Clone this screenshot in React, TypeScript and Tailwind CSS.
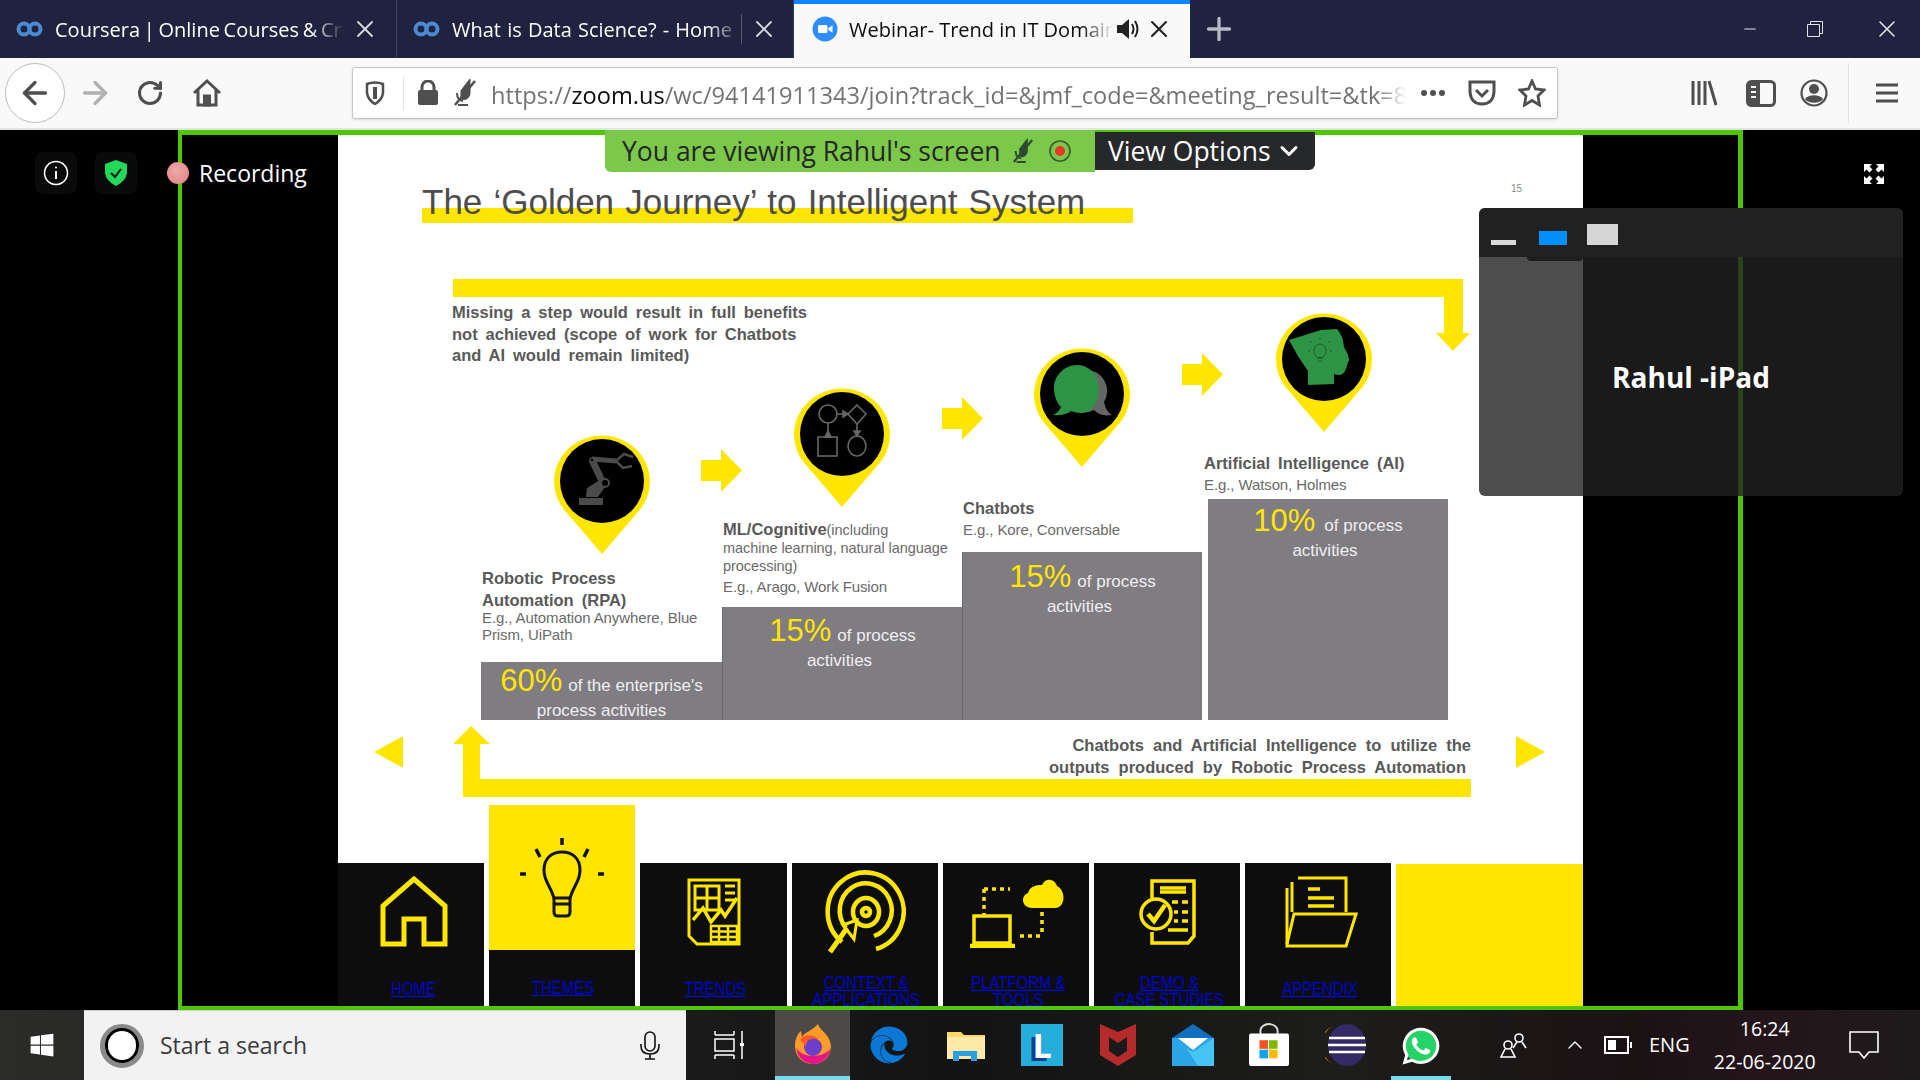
import { ArrowLeft, ArrowRight, RotateCw, ChevronDown, ChevronUp, Plus, X, Minus } from 'lucide-react';
import { FaEdge, FaWhatsapp, FaWindows } from 'react-icons/fa';

const Y = '#ffe600';

function CourseraLogo() {
  return (
    <svg width="27" height="16" viewBox="0 0 27 16" fill="none" stroke="#4a8ad0" strokeWidth="4">
      <circle cx="8" cy="8" r="5.5" />
      <circle cx="19" cy="8" r="5.5" />
    </svg>
  );
}

function ZoomLogo() {
  return (
    <svg width="26" height="26" viewBox="0 0 26 26">
      <circle cx="13" cy="13" r="12.5" fill="#2d8cff" />
      <rect x="6" y="9" width="9.5" height="8" rx="1.5" fill="#fff" />
      <path d="M16.5 12 L20.5 9.3 V16.7 L16.5 14 Z" fill="#fff" />
    </svg>
  );
}

function BrowserTab({ title, closeGap, spacing, sep }: { title: string; closeGap: string; spacing: string; sep?: boolean }) {
  return (
    <div className="flex h-[58px] w-[397px] items-center border-r border-[#3b3e5c] pl-4">
      <CourseraLogo />
      <span className={`${spacing} ml-3 w-[290px] overflow-hidden whitespace-nowrap pt-[2px] text-[20px] text-white [mask-image:linear-gradient(to_right,black_88%,transparent)]`}>
        {title}
      </span>
      {sep && <span className="ml-[-1px] h-[30px] w-px bg-[#555870]" />}
      <X className={`${closeGap} h-7 w-7 text-[#d5d6de]`} strokeWidth={1.6} />
    </div>
  );
}

function PinShape({ children }: { children: React.ReactNode }) {
  return (
    <svg width="96" height="119" viewBox="-48 -46 96 119" className="block">
      <path d="M0 73 L-35 32 A48 46 0 1 1 35 32 Z" fill={Y} />
      <circle cx="0" cy="0" r="42" fill="#000" />
      {children}
    </svg>
  );
}

function RobotIcon() {
  return (
    <g fill="#4b4b4b" stroke="#4b4b4b">
      <rect x="-23" y="17" width="24" height="7" strokeWidth="0" />
      <path d="M-16 16 L-15 7 L-2 -1 L3 6 L-4 16 Z" strokeWidth="0" />
      <path d="M1 2 L-10 -21" strokeWidth="7" fill="none" />
      <path d="M-10 -22 L14 -20" strokeWidth="5" fill="none" />
      <path d="M14 -20 L22 -27 L31 -24 M14 -20 L21 -13 L30 -15" strokeWidth="2.5" fill="none" />
      <circle cx="3" cy="2" r="4" fill="#000" strokeWidth="2" />
      <circle cx="-10" cy="-21" r="2" fill="#000" strokeWidth="1.5" />
    </g>
  );
}

function FlowIcon() {
  return (
    <g fill="none" stroke="#666" strokeWidth="1.6">
      <circle cx="-14" cy="-20" r="9" />
      <path d="M15 -29 L24 -20 L15 -10 L6 -20 Z" />
      <rect x="-24" y="3" width="19" height="19" />
      <ellipse cx="15" cy="12" rx="9" ry="10" />
      <path d="M-5 -20 H6 M-14 -11 V3 M15 -10 V2" />
      <path d="M1 -23 L6 -20 L1 -17 Z M-17 3 L-14 -3 L-11 3 Z M12 -3 L15 2 L18 -3 Z" fill="#666" />
    </g>
  );
}

function ChatIcon() {
  return (
    <g>
      <path d="M4 -24 A20 21 0 0 1 22 8 Q24 18 30 21 Q18 23 12 16 Q0 22 -10 14 Z" fill="#666" />
      <path d="M-5 -29 C-18 -29 -28 -18 -28 -6 C-28 4 -24 10 -21 13 Q-23 18 -29 21 Q-17 22 -11 17 Q-6 19 -1 19 C10 19 17 8 17 -5 C17 -18 8 -29 -5 -29 Z" fill="#2e9445" />
    </g>
  );
}

function HeadIcon() {
  return (
    <g>
      <path d="M-35 -19 L-3 -29 L13 -30 Q19 -24 20 -12 L24 -4 Q25 0 25 2 L24 3 Q23 8 21 12 Q18 18 10 15 L10 25 L-16 26 L-16 12 Q-27 -3 -35 -19 Z" fill="#2e9445" />
      <g fill="none" stroke="#1d5c2b" strokeWidth="1">
        <ellipse cx="-4" cy="-8" rx="6" ry="7" />
        <path d="M-7 -1 H-1 M-6 2 H-2 M-4 -22 V-20 M-14 -18 L-12 -16 M6 -18 L4 -16 M-16 -8 H-14 M6 -8 H8" />
      </g>
    </g>
  );
}

function StepArrow({ className }: { className: string }) {
  return (
    <svg width="41" height="43" viewBox="0 0 41 43" className={`absolute z-10 ${className}`}>
      <path d="M0 11 H20 V0 L41 21.5 L20 43 V32 H0 Z" fill={Y} />
    </svg>
  );
}

function Stat({ pct, line1, line2, gap, nudge }: { pct: string; line1: string; line2: string; gap?: string; nudge?: string }) {
  return (
    <div className="text-center text-[17px] text-[#f0eff1]">
      <div className="flex items-baseline justify-center">
        <span className="text-[31px] leading-[36px] text-[#ffe600]">{pct}</span>
        <span className={gap ?? 'ml-[6px]'}>{line1}</span>
      </div>
      <div className={`leading-[24px] ${nudge ?? ''}`}>{line2}</div>
    </div>
  );
}

function RpaColumn() {
  return (
    <div className="relative w-[241px]">
      <div className="flex justify-center"><PinShape><RobotIcon /></PinShape></div>
      <StepArrow className="right-[-20px] top-[14px]" />
      <div className="h-[108px] pl-[1px] pt-[13px] text-[#595959]">
        <div className="text-[16.5px] font-bold leading-[22px] [word-spacing:3.5px]">Robotic Process<br />Automation (RPA)</div>
        <div className="mt-[-2px] text-[15px] leading-[17px] tracking-[-0.1px] text-[#6a6a6a]">E.g., Automation Anywhere, Blue<br />Prism, UiPath</div>
      </div>
      <div className="h-[58px] overflow-hidden bg-[#7f7c82] pt-[1px]">
        <Stat pct="60%" line1="of the enterprise's" line2="process activities" />
      </div>
    </div>
  );
}

function MlColumn() {
  return (
    <div className="relative w-[240px]">
      <div className="flex justify-center"><PinShape><FlowIcon /></PinShape></div>
      <StepArrow className="right-[-21px] top-[9px]" />
      <div className="h-[100px] pl-[1px] pt-[13px] text-[#6a6a6a]">
        <div className="text-[14.5px] leading-[18px] tracking-[-0.05px]">
          <span className="text-[16.5px] font-bold tracking-normal text-[#595959]">ML/Cognitive</span>(including<br />
          machine learning, natural language<br />processing)
        </div>
        <div className="mt-[3px] text-[15px] leading-[18px] tracking-[-0.1px]">E.g., Arago, Work Fusion</div>
      </div>
      <div className="h-[113px] border-l border-[#6a686d] bg-[#7f7c82] pt-[6px]">
        <Stat pct="15%" line1="of process" line2="activities" nudge="pr-[6px]" />
      </div>
    </div>
  );
}

function ChatColumn() {
  return (
    <div className="relative w-[240px]">
      <div className="flex justify-center"><PinShape><ChatIcon /></PinShape></div>
      <StepArrow className="right-[-21px] top-[5px]" />
      <div className="h-[85px] pl-[1px] pt-[30px]">
        <div className="text-[16.5px] font-bold leading-[22px] text-[#595959]">Chatbots</div>
        <div className="mt-[2px] text-[15px] leading-[18px] tracking-[-0.1px] text-[#6a6a6a]">E.g., Kore, Conversable</div>
      </div>
      <div className="h-[168px] border-l border-[#6a686d] bg-[#7f7c82] pt-[7px]">
        <Stat pct="15%" line1="of process" line2="activities" nudge="pr-[6px]" />
      </div>
    </div>
  );
}

function AiColumn() {
  return (
    <div className="ml-[6px] w-[240px]">
      <div className="flex justify-center pr-[8px]"><PinShape><HeadIcon /></PinShape></div>
      <div className="ml-[-4px] h-[67px] w-[260px] pt-[20px]">
        <div className="text-[16.5px] font-bold leading-[22px] text-[#595959] [word-spacing:3.5px]">Artificial Intelligence (AI)</div>
        <div className="text-[15px] leading-[21px] tracking-[-0.1px] text-[#6a6a6a]">E.g., Watson, Holmes</div>
      </div>
      <div className="h-[221px] bg-[#7f7c82] pt-[4px]">
        <Stat pct="10%" line1="of process" line2="activities" gap="ml-[9px]" nudge="pr-[6px]" />
      </div>
    </div>
  );
}

function NavIcon({ name }: { name: string }) {
  const c = Y;
  if (name === 'home') {
    return (
      <svg width="68" height="72" viewBox="0 0 68 72" fill="none" stroke={c} strokeWidth="5" className="ml-[5px]">
        <path d="M3 30 L34 3 L65 30 V68 H44 V43 H24 V68 H3 Z" />
      </svg>
    );
  }
  if (name === 'trends') {
    return (
      <svg width="54" height="68" viewBox="0 0 54 68" fill="none" stroke={c} strokeWidth="3" className="ml-[2px]">
        <path d="M2 2 H52 V66 H10 L2 58 Z" />
        <rect x="8" y="8" width="24" height="24" />
        <path d="M8 20 H32 M20 8 V32 M38 8 H48 M38 15 H48 M38 22 H48" />
        <path d="M6 42 L16 30 L24 44 L34 32 L38 38 L50 20" strokeWidth="3.5" />
        <path d="M24 48 H50 V64 H24 Z M24 53.5 H50 M24 59 H50 M32 48 V64 M41 48 V64" strokeWidth="2.4" />
      </svg>
    );
  }
  if (name === 'context') {
    return (
      <svg width="82" height="84" viewBox="0 0 82 84" fill="none" stroke={c} strokeWidth="4.5">
        <path d="M18 72 A38 39 0 1 1 52 79" />
        <path d="M22 58 A26 27 0 1 1 50 66" />
        <ellipse cx="42" cy="42" rx="13" ry="14" />
        <circle cx="42" cy="42" r="4" />
        <path d="M6 82 L23 58" strokeWidth="5" />
        <path d="M33 50 L19 55 L30 69 Z" strokeWidth="3" />
      </svg>
    );
  }
  if (name === 'platform') {
    return (
      <svg width="96" height="72" viewBox="0 0 96 72" fill="none" stroke={c} strokeWidth="3.5" className="ml-[5px]">
        <path d="M62 32 C52 32 50 20 58 17 C60 10 66 9 72 9 C75 2 84 2 87 10 C96 14 96 32 85 32 Z" fill={c} stroke="none" />
        <path d="M14 13 H40 M14 13 V44 M72 36 V60 M50 60 H70" strokeDasharray="4 4" />
        <rect x="4" y="40" width="36" height="27" />
        <path d="M0 70 H45" strokeWidth="4.5" />
      </svg>
    );
  }
  if (name === 'demo') {
    return (
      <svg width="60" height="68" viewBox="0 0 60 68" fill="none" stroke={c} strokeWidth="3.5" className="ml-[2px]">
        <path d="M14 20 V3 H56 V58 L50 65 H14 V54" />
        <path d="M22 10 H48 M22 14 H48 M34 24 H40 M44 24 H50 M36 34 H40 M44 34 H50 M36 43 H40 M44 43 H50 M30 52 H50" />
        <circle cx="18" cy="36" r="15" />
        <path d="M10 36 L16 43 L27 27" strokeWidth="4.5" />
      </svg>
    );
  }
  return (
    <svg width="74" height="72" viewBox="0 0 74 72" fill="none" stroke={c} strokeWidth="3" className="ml-[5px]">
      <path d="M14 2 H62 V36 M8 6 V36 M3 12 V68" />
      <path d="M24 13 H36 M24 22 H50 M24 30 H50" strokeWidth="3.5" />
      <path d="M3 68 L10 38 H72 L62 70 H3 Z" />
    </svg>
  );
}

function BulbIcon() {
  return (
    <svg width="84" height="80" viewBox="0 0 84 80" fill="none" stroke="#111" strokeWidth="3">
      <path d="M42 0 V7 M16 11 L20 19 M68 11 L64 19 M0 36 H6 M78 36 H84" strokeWidth="3.5" />
      <path d="M34 60 C30 46 24 44 24 32 C24 20 32 14 42 14 C52 14 60 20 60 32 C60 44 54 46 50 60 Z" />
      <path d="M34 60 V74 Q34 78 38 78 H46 Q50 78 50 74 V60 M34 66 H50" />
    </svg>
  );
}

const navItems = [
  { name: 'home', label: 'HOME' },
  { name: 'trends', label: 'TRENDS' },
  { name: 'context', label: 'CONTEXT &', label2: 'APPLICATIONS' },
  { name: 'platform', label: 'PLATFORM &', label2: 'TOOLS' },
  { name: 'demo', label: 'DEMO &', label2: 'CASE STUDIES' },
  { name: 'appendix', label: 'APPENDIX' },
];

function NavCell({ name, label, label2 }: { name: string; label: string; label2?: string }) {
  return (
    <div className="flex h-[143px] w-[146.2px] flex-col items-center overflow-hidden bg-[#0d0d0d]">
      <div className="flex h-[96px] shrink-0 items-center justify-center pt-[2px]"><NavIcon name={name} /></div>
      <div className={`ml-[3px] scale-x-[0.83] whitespace-nowrap text-center text-[18px] leading-[17px] text-[#0000e6] underline ${label2 ? 'pt-[16px]' : 'pt-[22px]'}`}>
        {label}
        {label2 && <><br />{label2}</>}
      </div>
    </div>
  );
}

function Slide() {
  return (
    <div className="relative flex h-[871px] w-[1245px] flex-col overflow-hidden bg-white font-['Liberation_Sans',sans-serif]">
      <span className="absolute left-[1173px] top-[46px] text-[10px] text-[#8a8a8a]">15</span>

      <div className="h-[144px] pl-[84px] pt-[44px]">
        <div className="relative h-[44px] w-[711px]">
          <div className="absolute bottom-0 left-0 top-[29px] w-full bg-[#ffe600]" />
          <h1 className="relative top-[2px] whitespace-nowrap text-[35px] leading-[42px] text-[#4d4d4d] [word-spacing:1.4px]">
            The ‘Golden Journey’ to Intelligent System
          </h1>
        </div>
      </div>

      <div className="grid h-[441px] shrink-0">
        <svg width="1245" height="80" viewBox="0 0 1245 80" className="col-start-1 row-start-1 self-start">
          <path d="M115 0 H1125 V54 H1132 L1115 72 L1098 54 H1106 V18 H115 Z" fill={Y} />
        </svg>
        <div className="col-start-1 row-start-1 flex items-end self-end pl-[143px]">
          <RpaColumn />
          <MlColumn />
          <ChatColumn />
          <AiColumn />
        </div>
        <div className="col-start-1 row-start-1 self-start pl-[114px] pt-[23px] text-[16.5px] font-bold leading-[21.5px] text-[#595959] [word-spacing:3.3px]">
          Missing a step would result in full benefits<br />
          not achieved (scope of work for Chatbots<br />
          and AI would remain limited)
        </div>
      </div>

      <div className="grid h-[85px] shrink-0">
        <svg width="1245" height="85" viewBox="0 0 1245 85" className="col-start-1 row-start-1">
          <path d="M65 16 V48 L36 32 Z M1178 16 V48 L1207 32 Z" fill={Y} />
          <path d="M133 6 L152 24 H142 V59 H1133 V77 H125 V24 H115 Z" fill={Y} />
        </svg>
        <div className="col-start-1 row-start-1 pr-[112px] pt-[15px] text-right text-[16.5px] font-bold leading-[21.5px] text-[#595959] [word-spacing:4.5px]">
          Chatbots and Artificial Intelligence to utilize the<br />
          <span className="mr-[5px]">outputs produced by Robotic Process Automation</span>
        </div>
      </div>

      <div className="flex h-[201px] shrink-0 items-end gap-[5px] bg-white">
        <NavCell {...navItems[0]} />
        <div className="flex h-[201px] w-[146.2px] flex-col">
          <div className="flex h-[145px] items-start justify-center bg-[#ffe600] pt-[33px]"><BulbIcon /></div>
          <div className="flex-1 bg-[#0d0d0d] pt-[27px] text-center">
            <span className="inline-block scale-x-[0.83] text-[18px] leading-[17px] text-[#0000e6] underline">THEMES</span>
          </div>
        </div>
        {navItems.slice(1).map((n) => (
          <NavCell key={n.name} {...n} />
        ))}
        <div className="h-[142px] flex-1 bg-[#ffe600]" />
      </div>
    </div>
  );
}

function ToolbarIcons() {
  return (
    <div className="ml-auto flex items-center text-[#4f4f50]">
      <svg width="26" height="28" viewBox="0 0 26 28" fill="none" stroke="currentColor" className="mr-[29px]">
        <path d="M2 2 V26 M8 2 V26 M14 2 V26 M18 2 L25 26" strokeWidth="3" />
      </svg>
      <svg width="30" height="27" viewBox="0 0 30 27" className="mr-[24px]">
        <rect x="1.5" y="1.5" width="27" height="24" rx="4" fill="none" stroke="currentColor" strokeWidth="3" />
        <rect x="2" y="2" width="12" height="23" fill="currentColor" />
        <path d="M5 7 H10 M5 12 H10 M5 17 H10" stroke="#f9f9fa" strokeWidth="2" />
      </svg>
      <svg width="28" height="28" viewBox="0 0 28 28" className="mr-[20px]">
        <circle cx="14" cy="14" r="12.5" fill="none" stroke="currentColor" strokeWidth="2.2" />
        <circle cx="14" cy="10" r="5" fill="currentColor" />
        <path d="M5 20 C8 15 20 15 23 20 C20 25 8 25 5 20 Z" fill="currentColor" />
      </svg>
      <span className="mr-[27px] h-[60px] w-px bg-[#e3e3e4]" />
      <svg width="22" height="22" viewBox="0 0 22 22" className="mr-[22px]">
        <path d="M0 3 H22 M0 11 H22 M0 19 H22" stroke="currentColor" strokeWidth="3.2" />
      </svg>
    </div>
  );
}

function Toolbar() {
  return (
    <div className="flex h-[72px] shrink-0 items-center border-b-2 border-[#e4e4e5] bg-[#f9f9fa] text-[#4f4f50]">
      <div className="ml-[5px] flex h-[60px] w-[60px] items-center justify-center rounded-full border border-[#bdbdbd] bg-white">
        <ArrowLeft className="h-9 w-9" strokeWidth={2.2} />
      </div>
      <ArrowRight className="ml-[12px] h-9 w-9 text-[#b1b1b3]" strokeWidth={2.2} />
      <RotateCw className="ml-[23px] h-7 w-7" strokeWidth={2.6} />
      <svg width="30" height="30" viewBox="0 0 30 30" fill="none" stroke="currentColor" strokeWidth="3" className="ml-[28px]">
        <path d="M2 15 L15 3 L28 15 M6 12 V27 H24 V12" />
        <rect x="12.5" y="18" width="5" height="9" fill="currentColor" />
      </svg>

      <div className="ml-[130px] flex h-[52px] w-[1206px] shrink-0 items-center rounded-[3px] border border-[#c4c4c4] bg-white shadow-sm">
        <svg width="20" height="24" viewBox="0 0 20 24" fill="none" stroke="currentColor" className="ml-[12px]">
          <path d="M2 3 Q10 0 18 3 V12 Q17 19 10 23 Q3 19 2 12 Z" strokeWidth="2.5" />
          <path d="M10 6 V18" strokeWidth="4" />
        </svg>
        <span className="ml-[18px] h-[34px] w-px bg-[#e3e3e4]" />
        <svg width="22" height="26" viewBox="0 0 22 26" className="ml-[13px]">
          <path d="M5 11 V7 A6 6 0 0 1 17 7 V11" fill="none" stroke="currentColor" strokeWidth="3" />
          <rect x="1" y="10" width="20" height="15" rx="2" fill="currentColor" />
        </svg>
        <svg width="24" height="28" viewBox="0 0 24 28" fill="none" stroke="currentColor" strokeWidth="3" className="ml-[14px]">
          <path d="M2 26 L22 2" strokeWidth="2.5" />
          <path d="M16 3 L9 12 L9 19 Q14 21 16 15 Z" fill="currentColor" />
          <path d="M4 14 Q4 21 10 22 M5 26 H15" strokeWidth="2" />
        </svg>
        <div className="ml-[14px] w-[915px] overflow-hidden whitespace-nowrap pt-[4px] text-[23.6px] leading-[34px] text-[#737373] [mask-image:linear-gradient(to_right,black_97%,transparent)]">
          https://<span className="text-[#0c0c0d]">zoom.us</span>/wc/94141911343/join?track_id=&amp;jmf_code=&amp;meeting_result=&amp;tk=8
        </div>
        <div className="ml-[15px] flex gap-[3px]">
          <span className="h-[6px] w-[6px] rounded-full bg-[#4f4f50]" />
          <span className="h-[6px] w-[6px] rounded-full bg-[#4f4f50]" />
          <span className="h-[6px] w-[6px] rounded-full bg-[#4f4f50]" />
        </div>
        <svg width="28" height="26" viewBox="0 0 28 26" fill="none" stroke="currentColor" className="ml-[23px]">
          <path d="M2 2 H26 V12 Q25 24 14 24 Q3 24 2 12 Z" strokeWidth="3" />
          <path d="M8 10 L14 16 L20 10" strokeWidth="3" />
        </svg>
        <svg width="28" height="28" viewBox="0 0 28 28" fill="none" stroke="currentColor" strokeWidth="2.8" className="ml-[22px]">
          <path d="M14 2 L17.5 10 L26 11 L20 17 L21.5 26 L14 21.5 L6.5 26 L8 17 L2 11 L10.5 10 Z" />
        </svg>
      </div>
      <ToolbarIcons />
    </div>
  );
}

function TabStrip() {
  return (
    <div className="flex h-[58px] shrink-0 items-stretch bg-[#20233f] font-['Open_Sans',sans-serif]">
      <BrowserTab title="Coursera | Online Courses & Credentials" closeGap="ml-[6px]" spacing="[word-spacing:-1.5px]" />
      <BrowserTab title="What is Data Science? - Home | Coursera" closeGap="ml-[8px]" spacing="[word-spacing:1px]" sep />
      <div className="flex w-[396px] items-center border-t-4 border-[#0a84ff] bg-[#f9f9fa] pb-1 pl-[18px]">
        <ZoomLogo />
        <span className="ml-[11px] w-[264px] overflow-hidden whitespace-nowrap pt-[2px] text-[20px] text-[#0c0c0d] [mask-image:linear-gradient(to_right,black_88%,transparent)]">
          Webinar- Trend in IT Domain Knowledge
        </span>
        <svg width="24" height="24" viewBox="0 0 24 24" className="ml-[3px]">
          <path d="M1 8 H6 L13 2 V22 L6 16 H1 Z" fill="#222" />
          <path d="M16 7 Q19 12 16 17 M19 4 Q24 12 19 20" fill="none" stroke="#222" strokeWidth="2" />
        </svg>
        <X className="ml-[5px] h-7 w-7 text-[#222]" strokeWidth={1.8} />
      </div>
      <div className="flex w-[58px] items-center justify-center">
        <Plus className="h-9 w-9 text-[#b9bac6]" strokeWidth={2.2} />
      </div>
      <div className="ml-auto flex items-center text-[#e2e3ea]">
        <Minus className="mr-[48px] h-[18px] w-[18px]" strokeWidth={1.4} />
        <svg width="16" height="16" viewBox="0 0 16 16" fill="none" stroke="currentColor" className="mr-[50px]">
          <path d="M3.5 3.5 V0.5 H15.5 V12.5 H12.5 M0.5 3.5 H12.5 V15.5 H0.5 Z" />
        </svg>
        <X className="mr-[19px] h-7 w-7" strokeWidth={1.3} />
      </div>
    </div>
  );
}

function LeftOverlay() {
  return (
    <div className="absolute left-[35px] top-[22px] z-20 flex items-center font-['Open_Sans',sans-serif]">
      <div className="flex h-[42px] w-[42px] items-center justify-center rounded-lg bg-[#0a0a0a]">
        <svg width="26" height="26" viewBox="0 0 26 26" fill="none" stroke="#fff" strokeWidth="1.5">
          <circle cx="13" cy="13" r="11.5" />
          <path d="M13 11 V19" strokeWidth="2" />
          <circle cx="13" cy="7.5" r="1" fill="#fff" stroke="none" />
        </svg>
      </div>
      <div className="ml-[18px] flex h-[42px] w-[42px] items-center justify-center rounded-lg bg-[#0a0a0a]">
        <svg width="24" height="26" viewBox="0 0 24 26">
          <path d="M12 0 L23 4 V13 Q22 21 12 26 Q2 21 1 13 V4 Z" fill="#23d959" />
          <path d="M7 13 L11 17 L17 9" fill="none" stroke="#111" strokeWidth="2" />
        </svg>
      </div>
      <span className="ml-[30px] h-[22px] w-[22px] rounded-full bg-[radial-gradient(circle_at_45%_40%,#eeaaaa,#e27f7f)]" />
      <span className="ml-[10px] text-[23px] leading-[30px] text-white">Recording</span>
    </div>
  );
}

function ShareBanner() {
  return (
    <div className="absolute left-[423px] top-[-5px] z-20 flex items-start font-['Open_Sans',sans-serif]">
      <div className="flex h-[42px] w-[490px] items-center rounded-bl-md bg-[#7bc84a] pl-[17px] text-[26.5px] text-[#262626]">
        <span className="pt-[2px]">You are viewing Rahul's screen</span>
        <svg width="22" height="26" viewBox="0 0 24 28" fill="none" stroke="#2c4a30" strokeWidth="2.4" className="ml-[11px]">
          <path d="M2 26 L22 2" />
          <path d="M16 3 L9 12 L9 19 Q14 21 16 15 Z" fill="#2c4a30" />
          <path d="M4 14 Q4 21 10 22 M5 26 H15" strokeWidth="2" />
        </svg>
        <svg width="22" height="22" viewBox="0 0 22 22" className="ml-[15px]">
          <circle cx="11" cy="11" r="10" fill="none" stroke="#3b5f33" strokeWidth="1.6" />
          <circle cx="11" cy="11" r="5" fill="#e6382c" />
        </svg>
      </div>
      <div className="mt-[2px] flex h-[38px] w-[220px] items-center rounded-br-md bg-[#26282a] pl-[13px] text-[26.5px] text-white">
        <span className="pt-[1px]">View Options</span>
        <ChevronDown className="ml-[4px] h-7 w-7" strokeWidth={2.6} />
      </div>
    </div>
  );
}

function FloatingPanel() {
  return (
    <div className="absolute left-[1479px] top-[78px] z-30 flex h-[288px] w-[424px] flex-col overflow-hidden rounded-[6px] bg-[#212121]/80 font-['Open_Sans',sans-serif]">
      <div className="relative flex h-[49px] shrink-0 items-end gap-[23px] bg-[#212121] pb-[12px] pl-[12px]">
        <span className="h-[5px] w-[25px] bg-[#d9d9d9]" />
        <span className="h-[14px] w-[28px] bg-[#0090ff]" />
        <span className="ml-[-3px] h-[21px] w-[31px] bg-[#d6d6d6]" />
        <span className="absolute bottom-[-4px] left-[48px] h-[4px] w-[56px] rounded-b-md bg-[#1e1e1e]" />
      </div>
      <div className="flex flex-1 items-center justify-center text-[28px] font-bold text-white">Rahul -iPad</div>
    </div>
  );
}

function StoreIcon() {
  return (
    <svg width="40" height="44" viewBox="0 0 42 44">
      <path d="M12 12 V7 A9 7 0 0 1 30 7 V12" fill="none" stroke="#ddd" strokeWidth="2" />
      <rect x="0" y="10" width="42" height="34" rx="2" fill="#fff" />
      <rect x="11" y="17" width="9" height="9" fill="#f25022" />
      <rect x="21" y="17" width="9" height="9" fill="#7fba00" />
      <rect x="11" y="27" width="9" height="9" fill="#00a4ef" />
      <rect x="21" y="27" width="9" height="9" fill="#ffb900" />
    </svg>
  );
}

function Taskbar() {
  return (
    <div className="flex h-[70px] shrink-0 items-stretch bg-[linear-gradient(90deg,#2b2c29_0%,#131313_50%,#1d1d1b_70%,#1b1214_85%,#24151b_92%,#1e1a1c_100%)] font-['Open_Sans',sans-serif] text-white">
      <div className="flex w-[84px] items-center justify-center"><FaWindows className="h-[26px] w-[26px]" /></div>
      <div className="flex w-[602px] items-center border-t border-[#d0d0d0] bg-[#f2f2f2]">
        <div className="ml-[16px] flex h-[44px] w-[44px] items-center justify-center rounded-full border-[5px] border-[#8a8a8a]">
          <div className="h-[35px] w-[35px] rounded-full border-[3px] border-black bg-white" />
        </div>
        <span className="ml-[16px] text-[23px] text-[#3a3a3a]">Start a search</span>
        <svg width="22" height="30" viewBox="0 0 22 30" fill="none" stroke="#111" strokeWidth="1.6" className="ml-auto mr-[25px]">
          <rect x="6" y="1" width="10" height="19" rx="5" />
          <path d="M2 13 V15 Q2 23 11 23 Q20 23 20 15 V13 M11 23 V28 M6 28 H16" />
        </svg>
      </div>
      <div className="flex w-[89px] items-center justify-center pr-[4px]">
        <svg width="30" height="28" viewBox="0 0 30 28" fill="none" stroke="#fff" strokeWidth="1.5">
          <path d="M1 4 H20 M1 0 V4 M20 0 V4 M1 8 H20 V20 H1 Z M1 24 H20 M1 24 V28 M20 24 V28 M28 0 V28" />
          <rect x="26" y="12" width="4" height="3" fill="#fff" stroke="none" />
        </svg>
      </div>
      <div className="flex w-[75px] items-center justify-center border-b-4 border-[#78dbea] bg-[#4c4a48] pt-[2px]">
        <svg width="38" height="40" viewBox="0 0 38 40">
          <path d="M24 0 C25 6 36 10 37 22 C37 33 29 40 19 40 C8 40 1 32 1 22 C1 15 4 9 7 7 L8 13 C11 8 18 7 24 0 Z" fill="#ff9b28" />
          <path d="M2 24 C4 35 12 40 19 40 C28 40 35 34 37 24 C32 33 10 36 2 24 Z" fill="#e31587" />
          <circle cx="19" cy="23" r="9" fill="#6b3fc9" />
          <path d="M6 16 C10 10 20 10 24 15 C18 13 12 16 12 22 Z" fill="#ff5a2c" />
        </svg>
      </div>
      <div className="flex w-[77px] items-center justify-center"><FaEdge className="h-[42px] w-[38px] text-[#0a78d4]" /></div>
      <div className="flex w-[77px] items-center justify-center">
        <svg width="38" height="32" viewBox="0 0 38 32">
          <path d="M0 3 H14 L17 6 H38 V30 H0 Z" fill="#ffd768" />
          <rect x="0" y="8" width="38" height="22" fill="#ffe9a6" />
          <path d="M6 32 V22 H30 V32 H24 V27 H12 V32 Z" fill="#2b9fe0" />
        </svg>
      </div>
      <div className="flex w-[76px] items-center justify-center">
        <div className="flex h-[42px] w-[42px] items-center justify-center bg-[#25aedb] text-[34px] font-bold leading-none text-white [text-shadow:-4px_3px_0_#123e8c]">L</div>
      </div>
      <div className="flex w-[75px] items-center justify-center">
        <svg width="36" height="42" viewBox="0 0 36 42">
          <path d="M0 0 L18 8 L36 0 V31 L18 42 L0 31 Z" fill="#b52b2b" />
          <path d="M9 13 L18 19 L27 13 V27 L18 33 L9 27 Z" fill="#1a1a1a" />
        </svg>
      </div>
      <div className="flex w-[76px] items-center justify-center">
        <svg width="42" height="42" viewBox="0 0 42 42">
          <path d="M0 14 L21 0 L42 14 V42 H0 Z" fill="#0f6fc0" />
          <path d="M0 14 H42 V42 H0 Z" fill="#2aa5e6" />
          <path d="M6 14 H36 L21 26 Z" fill="#fff" />
          <path d="M42 14 V42 H26 L14 24 L21 28 Z" fill="#45c4f5" />
        </svg>
      </div>
      <div className="flex w-[76px] items-center justify-center"><StoreIcon /></div>
      <div className="flex w-[77px] items-center justify-center">
        <svg width="42" height="42" viewBox="0 0 42 42">
          <ellipse cx="22" cy="21" rx="19" ry="21" fill="#332a66" />
          <path d="M8 2 A22 21 0 0 0 8 40 A20 21 0 0 1 8 2 Z" fill="#f08a1c" />
          <path d="M4 14 H40 M3 21 H41 M4 28 H40" stroke="#fff" strokeWidth="2.5" />
        </svg>
      </div>
      <div className="flex w-[74px] flex-col items-center justify-end">
        <div className="relative mb-[10px] flex h-[40px] w-[40px] items-center justify-center">
          <span className="absolute inset-[3px] rounded-full bg-[#25d366]" />
          <FaWhatsapp className="relative h-[42px] w-[42px] text-white" />
        </div>
        <span className="h-[4px] w-[60px] bg-[#78dbea]" />
      </div>
      <div className="ml-[42px] flex items-center">
        <svg width="28" height="28" viewBox="0 0 28 28" fill="none" stroke="#fff" strokeWidth="1.6">
          <circle cx="19" cy="7" r="4" />
          <path d="M17 11 L13 17 M22 11 L26 17" />
          <circle cx="8" cy="14" r="4" />
          <path d="M5 18 L1 26 H15 L11 18" />
        </svg>
        <ChevronUp className="ml-[35px] h-[24px] w-[24px]" strokeWidth={1.4} />
        <svg width="28" height="18" viewBox="0 0 28 18" fill="none" stroke="#fff" strokeWidth="2" className="ml-[17px]">
          <rect x="1" y="1" width="23" height="16" />
          <rect x="4" y="4" width="8" height="10" fill="#fff" stroke="none" />
          <path d="M27 6 V12" strokeWidth="2" />
        </svg>
        <span className="ml-[17px] text-[20px]">ENG</span>
      </div>
      <div className="ml-[20px] flex w-[110px] flex-col items-center justify-center gap-[9px] text-[19.5px] leading-[24px]">
        <span>16:24</span>
        <span className="whitespace-nowrap">22-06-2020</span>
      </div>
      <div className="ml-[29px] flex items-center">
        <svg width="30" height="28" viewBox="0 0 30 28" fill="none" stroke="#fff" strokeWidth="1.6">
          <path d="M1 1 H29 V21 H20 L15 27 L10 21 H1 Z" />
        </svg>
      </div>
    </div>
  );
}

export default function App() {
  return (
    <div className="flex h-[1080px] w-[1920px] flex-col overflow-hidden bg-black">
      <TabStrip />
      <div className="font-['Open_Sans',sans-serif]"><Toolbar /></div>
      <div className="relative h-[880px] shrink-0 bg-black">
        <div className="relative ml-[178px] h-[880px] w-[1565px] border-b-[4px] border-l-[4px] border-r-[5px] border-t-[5px] border-[#4dc700] pl-[156px]">
          <Slide />
          <ShareBanner />
        </div>
        <LeftOverlay />
        <svg width="22" height="22" viewBox="0 0 22 22" className="absolute left-[1863px] top-[33px]">
          <path d="M1 1 H9 L6.5 3.5 L9.5 6.5 L6.5 9.5 L3.5 6.5 L1 9 Z M21 1 H13 L15.5 3.5 L12.5 6.5 L15.5 9.5 L18.5 6.5 L21 9 Z M1 21 H9 L6.5 18.5 L9.5 15.5 L6.5 12.5 L3.5 15.5 L1 13 Z M21 21 H13 L15.5 18.5 L12.5 15.5 L15.5 12.5 L18.5 15.5 L21 13 Z" fill="#fff" />
        </svg>
        <FloatingPanel />
      </div>
      <Taskbar />
    </div>
  );
}
